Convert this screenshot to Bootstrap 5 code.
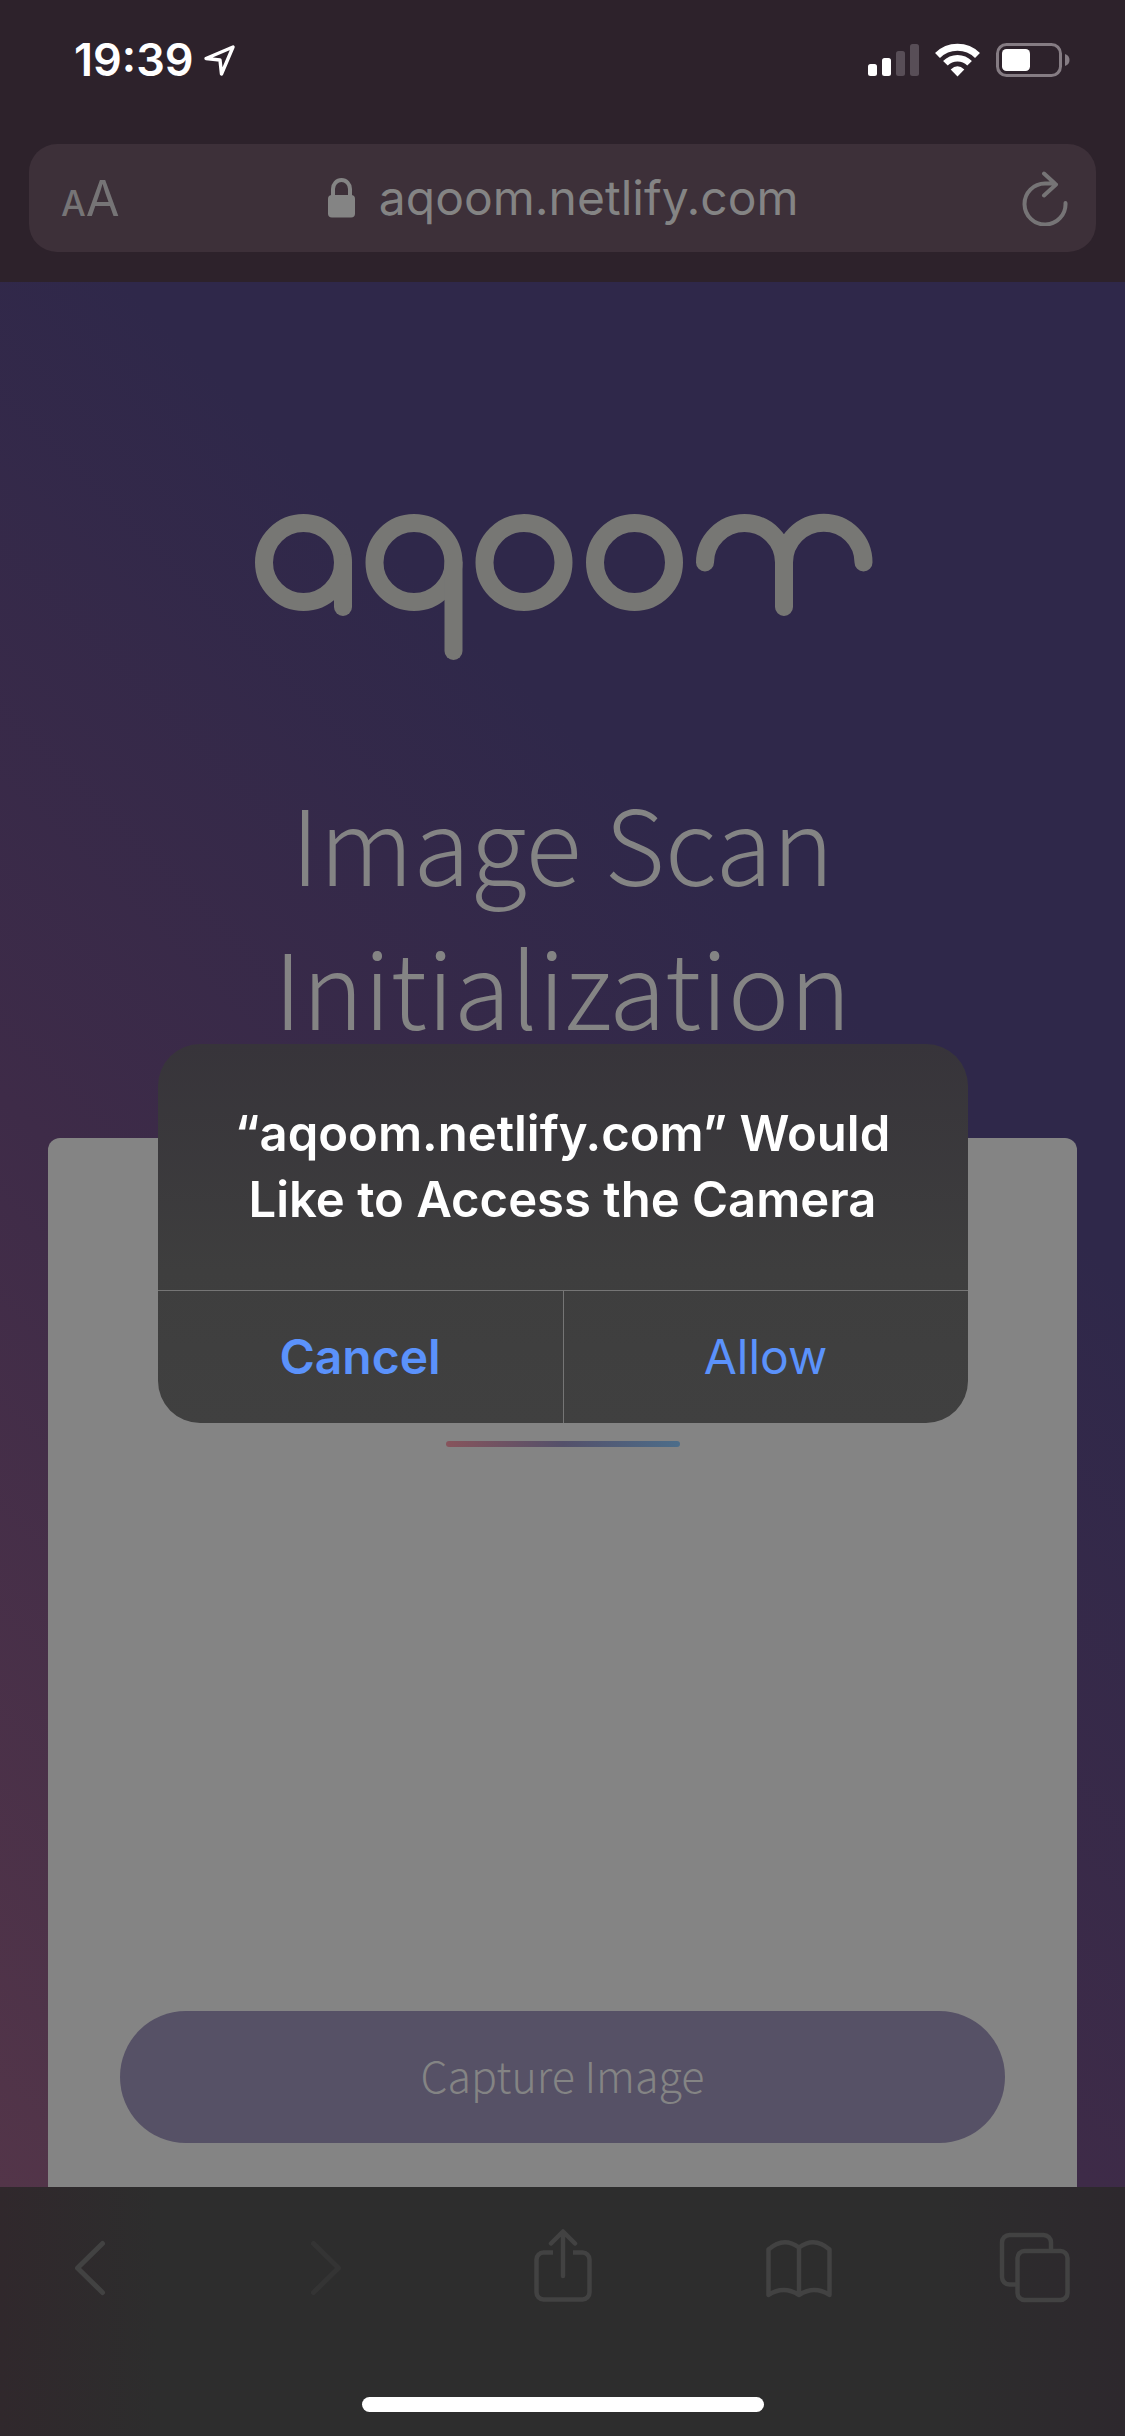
<!DOCTYPE html>
<html lang="en">
<head>
<meta charset="utf-8">
<meta name="viewport" content="width=device-width, initial-scale=1">
<title>aqoom – Image Scan</title>
<link href="https://cdn.jsdelivr.net/npm/bootstrap@5.3.0/dist/css/bootstrap.min.css" rel="stylesheet">
<style>
  body { font-family: Inter, "Liberation Sans", sans-serif; background: #2d222b; }
  svg { display: block; flex: none; }

  /* Browser chrome */
  .top-chrome { background: #2d222b; color: #fff; padding: 0 29px 30px; }
  .status-row { height: 144px; padding: 0 26px 24px 45px; }
  .clock { font-size: 45px; line-height: 48px; font-weight: 600; }
  .address-bar { height: 108px; border-radius: 28px; background: #3d3039; padding: 0 28px 0 32px; color: #767476; }
  .address-bar button, .tool-row button { background: none; border: 0; padding: 0; color: inherit; }
  .address-bar .text-size { line-height: 56px; padding-top: 12px; }
  .text-size .size-s { font-size: 35px; font-weight: 500; }
  .text-size .size-l { font-size: 49px; }
  .url-box { width: 435px; height: 72px; background: none; border: 0; outline: 0; padding: 0; color: #848484; font-size: 48px; }

  /* Page */
  .scan-page { background: linear-gradient(45deg, #533549 0%, #3e2b48 36%, #2f284a 67%); padding: 232px 48px 0; }
  .scan-title { font-family: "Noto Sans CJK SC", "Open Sans", sans-serif; font-weight: 200; font-size: 104px; line-height: 144px; color: #848484; max-width: 700px; margin: 109px 0 81px; }
  .scan-card { background: #848484; border-radius: 12px 12px 0 0; padding: 303px 72px 44px; }
  .progress-line { width: 234px; height: 6px; border-radius: 3px; background: linear-gradient(90deg, #87545c, #54506a 50%, #4c6d8a); }
  .capture-btn { height: 132px; border: 0; border-radius: 66px; padding-bottom: 6px; background: #565166; color: #848484; font-family: "Noto Sans CJK SC", "Open Sans", sans-serif; font-weight: 200; font-size: 43px; }

  /* Permission dialog, laid over the page */
  .permission { top: 1044px; width: 72%; border-radius: 42px; background: linear-gradient(#37343a, #3e3e3e 60%, #404040); color: #fff; }
  .permission h2 { font-size: 49px; line-height: 66px; font-weight: 600; margin: 0; padding: 57px 40px 57px; }
  .permission-actions { border-top: 1px solid #757575; }
  .permission-actions button { height: 132px; background: none; border: 0; color: #5b92fb; font-size: 48px; }
  .permission-actions button + button { border-left: 1px solid #757575; }

  /* Toolbar */
  .bottom-chrome { height: 249px; padding: 42px 54px 24px; background: linear-gradient(90deg, #30282c, #2d2d2d 14%, #2d2d2d 84%, #2d282d); color: #424242; }
  .tool-row button { width: 72px; display: flex; justify-content: center; }
  .tool-row .faded { color: #343434; }
  .home-bar { width: 402px; height: 15px; border-radius: 8px; background: #fff; }
</style>
</head>
<body>
<div class="d-flex flex-column min-vh-100 position-relative">

  <header class="top-chrome">
    <div class="status-row d-flex align-items-center justify-content-between">
      <div class="d-flex align-items-center gap-2">
        <span class="clock">19:39</span>
        <svg width="34" height="34" viewBox="0 0 34 34" fill="none" stroke="#fff" stroke-width="3.4" stroke-linejoin="round"><path d="M4 15.500 31 4 19.500 31 18 17Z"/></svg>
      </div>
      <div class="d-flex align-items-center gap-3">
        <svg width="51" height="34" viewBox="0 0 51 34"><g fill="#fff"><rect y="21" width="9" height="12" rx="2.500"/><rect x="14" y="15" width="9" height="18" rx="2.500"/></g><g fill="#584e57"><rect x="28" y="8" width="9" height="25" rx="2.500"/><rect x="42" y="1" width="9" height="32" rx="2.500"/></g></svg>
        <svg width="45" height="34" viewBox="0 0 45 34" fill="none" stroke="#fff"><path stroke-width="7" d="M2.500 12.500a28.500 28.500 0 0 1 40 0"/><path stroke-width="6.500" d="M10.400 20.300a17 17 0 0 1 24.200 0"/><path fill="#fff" stroke="none" d="M22.500 33.500 15.700 26.500q6.800-6.500 13.600 0Z"/></svg>
        <svg width="74" height="34" viewBox="0 0 74 34"><rect x="1.500" y="1.500" width="63" height="31" rx="9" fill="none" stroke="#857c83" stroke-width="3"/><rect x="6" y="6" width="28" height="22" rx="4.500" fill="#fff"/><path d="M69 11q4.500 1.500 4.500 6t-4.500 6Z" fill="#857c83"/></svg>
      </div>
    </div>
    <form class="address-bar d-flex align-items-center justify-content-between">
      <button type="button" class="text-size" aria-label="Text size"><span class="size-s">A</span><span class="size-l">A</span></button>
      <label class="d-flex align-items-center gap-4">
        <svg width="27" height="40" viewBox="0 0 27 40"><rect y="17" width="27" height="22.500" rx="4" fill="#848484"/><path d="M5 18V11a8.500 9 0 0 1 17 0v7" fill="none" stroke="#848484" stroke-width="4"/></svg>
        <input class="url-box" type="text" value="aqoom.netlify.com" aria-label="Address">
      </label>
      <button type="button" aria-label="Reload"><svg width="46" height="56" viewBox="0 0 46 56" fill="none" stroke="currentColor" stroke-width="4" stroke-linecap="round" stroke-linejoin="round"><path d="M43.500 33A20.500 20.500 0 1 1 23 13.500h10M22 3.500 34 14.500 22 25.500"/></svg></button>
    </form>
  </header>

  <main class="scan-page flex-grow-1 d-flex flex-column align-items-center">
    <svg width="616" height="146" viewBox="255 514 616 146" overflow="visible" fill="none" stroke="#777774" stroke-width="18" stroke-linecap="round" role="img" aria-label="aqoom">
      <circle cx="303.500" cy="562.500" r="39.500"/><path d="M343 562.500V607"/>
      <circle cx="414" cy="562.500" r="39.500"/><path d="M453.500 562.500V651"/>
      <circle cx="524" cy="562.500" r="39.500"/>
      <circle cx="634.500" cy="562.500" r="39.500"/>
      <path d="M705 562.500a39.500 39.500 0 0 1 79 0V607M784 562.500a39.500 39.500 0 0 1 79.500 0"/>
    </svg>
    <h1 class="scan-title text-center">Image Scan Initialization</h1>
    <section class="scan-card align-self-stretch flex-grow-1 d-flex flex-column align-items-center justify-content-between">
      <div class="progress-line"></div>
      <button type="button" class="capture-btn w-100">Capture Image</button>
    </section>
  </main>

  <div class="permission position-absolute start-50 translate-middle-x text-center" role="dialog" aria-labelledby="ask">
    <h2 id="ask">“aqoom.netlify.com” Would Like to Access the Camera</h2>
    <div class="permission-actions d-flex">
      <button type="button" class="flex-fill w-50 fw-semibold">Cancel</button>
      <button type="button" class="flex-fill w-50">Allow</button>
    </div>
  </div>

  <footer class="bottom-chrome d-flex flex-column align-items-center justify-content-between">
    <nav class="tool-row d-flex justify-content-between w-100" aria-label="Browser tools">
      <button type="button" aria-label="Back"><svg width="54" height="76" viewBox="0 0 54 76" fill="none" stroke="currentColor" stroke-width="5" stroke-linecap="round" stroke-linejoin="round"><path d="M39.500 14.500 14.500 39 39.500 63.500"/></svg></button>
      <button type="button" class="faded" aria-label="Forward" disabled><svg width="54" height="76" viewBox="0 0 54 76" fill="none" stroke="currentColor" stroke-width="5" stroke-linecap="round" stroke-linejoin="round"><path d="M14.500 14.500 39.500 39 14.500 63.500"/></svg></button>
      <button type="button" aria-label="Share"><svg width="58" height="76" viewBox="0 0 58 76" fill="none" stroke="currentColor" stroke-width="4.500" stroke-linecap="round" stroke-linejoin="round"><path stroke-linecap="butt" d="M19 23.500H9.500a7 7 0 0 0-7 7V63.500a7 7 0 0 0 7 7H48.500a7 7 0 0 0 7-7V30.500a7 7 0 0 0-7-7H39"/><path d="M29 47V3.500M17 14.500 29 2.500 41 14.500"/></svg></button>
      <button type="button" aria-label="Bookmarks"><svg width="68" height="76" viewBox="0 0 68 76" fill="none" stroke="currentColor" stroke-width="4.500" stroke-linecap="round" stroke-linejoin="round"><path d="M3.500 20.500Q18.500 7 34 18.500 49.500 7 64.500 20.500V66Q49.500 56 34 66 18.500 56 3.500 66ZM34 18.500V66"/></svg></button>
      <button type="button" aria-label="Tabs"><svg width="72" height="76" viewBox="0 0 72 76" fill="none" stroke="currentColor" stroke-width="4.500"><rect x="18.500" y="22" width="50" height="49" rx="7"/><path d="M18.500 55.500H10.500a7.500 7.500 0 0 1-7.500-7.500V13.500A7.500 7.500 0 0 1 10.500 6H44.500a7.500 7.500 0 0 1 7.500 7.500V21"/></svg></button>
    </nav>
    <div class="home-bar"></div>
  </footer>
</div>
<script src="https://cdn.jsdelivr.net/npm/bootstrap@5.3.0/dist/js/bootstrap.bundle.min.js"></script>
</body>
</html>
